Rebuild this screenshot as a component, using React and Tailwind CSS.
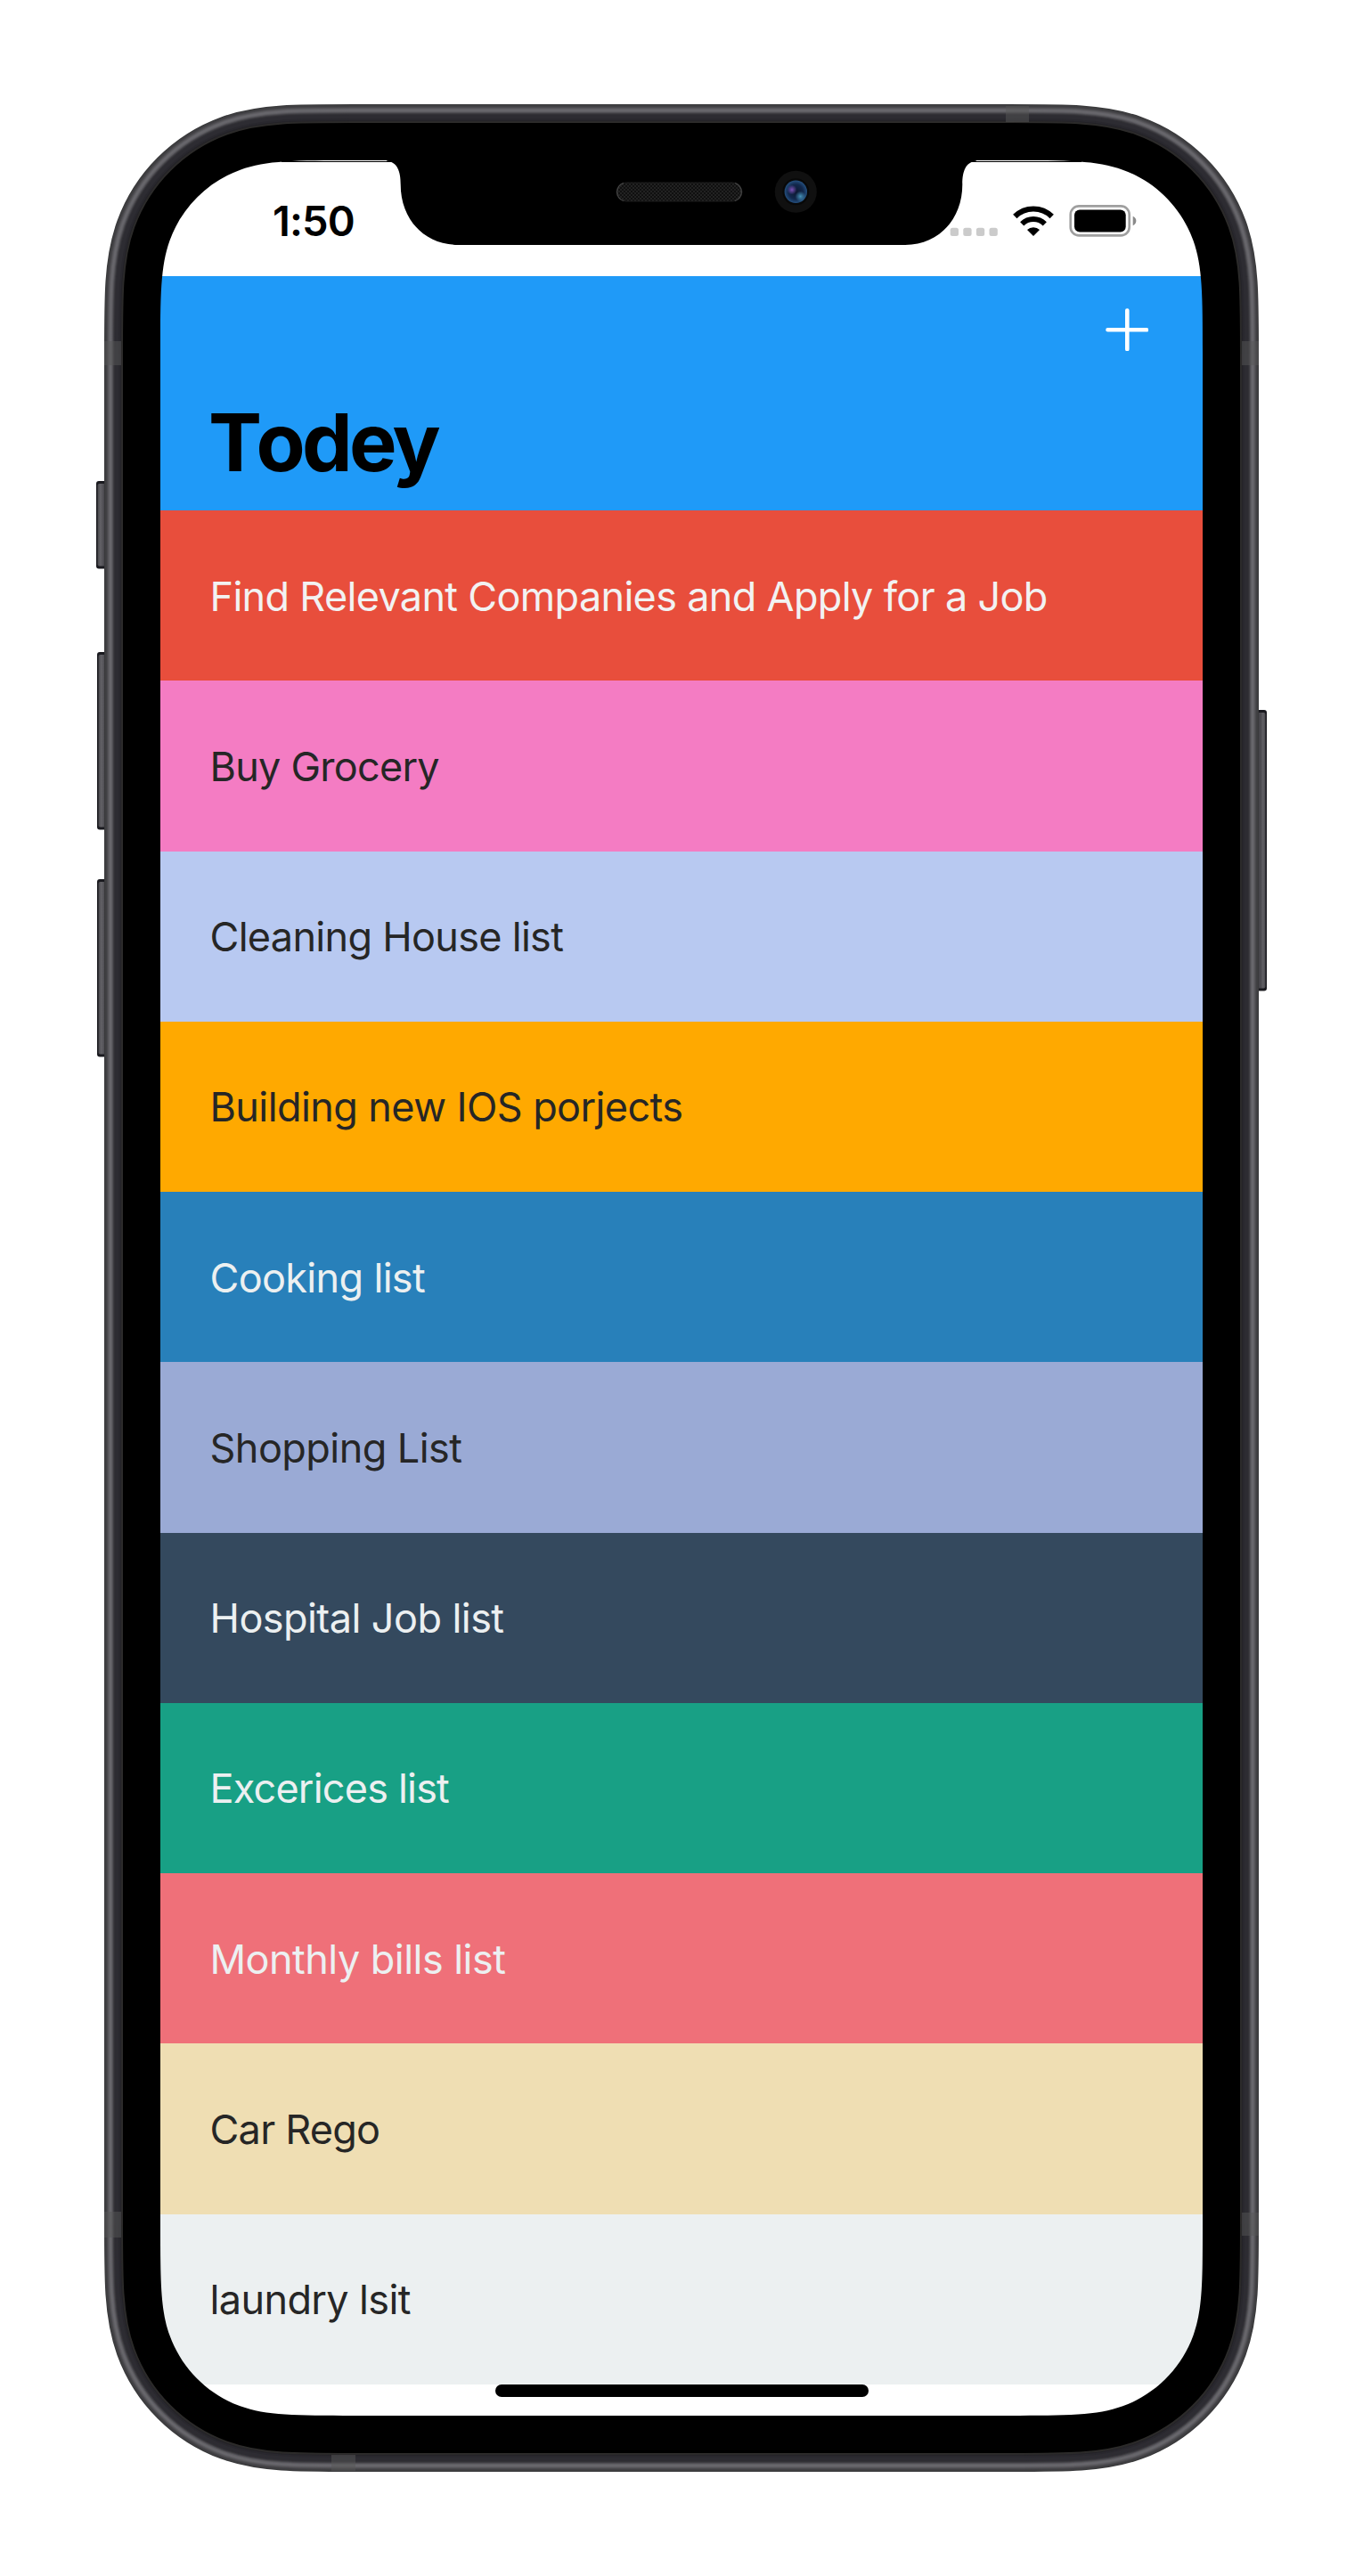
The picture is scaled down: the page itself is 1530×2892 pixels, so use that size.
const rows = [
  { t: "Find Relevant Companies and Apply for a Job", c: "bg-[#e84e3c] text-[#f2f2f2] tracking-[-0.68px]" },
  { t: "Buy Grocery", c: "bg-[#f47cc3] text-[#262626] tracking-[-0.75px]" },
  { t: "Cleaning House list", c: "bg-[#b8c9f1] text-[#262626] tracking-[-0.7px]" },
  { t: "Building new IOS porjects", c: "bg-[#ffa900] text-[#262626] tracking-[-0.59px]" },
  { t: "Cooking list", c: "bg-[#2880ba] text-[#ecf0f1] tracking-[-0.67px]" },
  { t: "Shopping List", c: "bg-[#9aaad5] text-[#262626] tracking-[-0.55px]" },
  { t: "Hospital Job list", c: "bg-[#34495e] text-[#ecf0f1] tracking-[-0.56px]" },
  { t: "Excerices list", c: "bg-[#18a085] text-[#ecf0f1] tracking-[-0.8px]" },
  { t: "Monthly bills list", c: "bg-[#ef7079] text-[#ecf0f1] tracking-[-0.54px]" },
  { t: "Car Rego", c: "bg-[#efdeb3] text-[#262626] tracking-[-0.75px]" },
  { t: "laundry lsit", c: "bg-[#ecf0f1] text-[#262626] tracking-[-0.62px]" },
];

// Continuous-corner rounded rectangle.
function squircle(x, y, w, h, r) {
  const [a, b, c, d, e, f, g] = [1.52866, 1.07, 0.8371, 0.63149, 0.07491, 0.37282, 0.16906].map((v) => v * r);
  const R = x + w;
  const B = y + h;
  return `M${x + a} ${y}H${R - a}C${R - b} ${y} ${R - c} ${y} ${R - d} ${y + e}C${R - f} ${y + g} ${R - g} ${y + f} ${R - e} ${y + d}C${R} ${y + c} ${R} ${y + b} ${R} ${y + a}V${B - a}C${R} ${B - b} ${R} ${B - c} ${R - e} ${B - d}C${R - g} ${B - f} ${R - f} ${B - g} ${R - d} ${B - e}C${R - c} ${B} ${R - b} ${B} ${R - a} ${B}H${x + a}C${x + b} ${B} ${x + c} ${B} ${x + d} ${B - e}C${x + f} ${B - g} ${x + g} ${B - f} ${x + e} ${B - d}C${x} ${B - c} ${x} ${B - b} ${x} ${B - a}V${y + a}C${x} ${y + b} ${x} ${y + c} ${x + e} ${y + d}C${x + g} ${y + f} ${x + f} ${y + g} ${x + d} ${y + e}C${x + c} ${y} ${x + b} ${y} ${x + a} ${y}Z`;
}

const screen = squircle(180, 180, 1170, 2532, 142);
const corners = squircle(170, 170, 1190, 2552, 130) + screen;

// Metal band, outermost ring first: [distance from the screen edge, colour].
const band = [
  [63, "#39393b"], [62, "#3f3f41"], [61, "#414044"], [60, "#4a494d"], [59, "#565559"],
  [58, "#605f64"], [57, "#68676c"], [56, "#67666b"], [55, "#5f5e63"], [54, "#4f4e53"],
  [53, "#3e3d42"], [52, "#323136"], [51, "#2d2c32"], [47, "#29282e"], [45, "#242328"],
  [44, "#2b2a2a"], [43, "#2d2c2b"],
];

function SideButton({ x, y, w, h, flip }) {
  return (
    <g>
      <rect x={x} y={y} width={w} height={h} rx="3" fill="#1a1a1f" />
      <rect x={flip ? x : x + 1.5} y={y + 3} width={w - 1.5} height={h - 6} rx="2" fill={flip ? "url(#btnR)" : "url(#btnL)"} />
    </g>
  );
}

function Chassis() {
  return (
    <svg className="absolute inset-0" width="1530" height="2892" viewBox="0 0 1530 2892" fill="none">
      <defs>
        <linearGradient id="btnL"><stop offset="0" stopColor="#47464a" /><stop offset=".3" stopColor="#626166" /><stop offset=".55" stopColor="#545358" /><stop offset="1" stopColor="#333238" /></linearGradient>
        <linearGradient id="btnR"><stop offset="0" stopColor="#3b3a3f" /><stop offset=".5" stopColor="#4c4b50" /><stop offset=".75" stopColor="#626166" /><stop offset="1" stopColor="#47464a" /></linearGradient>
      </defs>
      <SideButton x={108} y={540} w={12} h={98.5} />
      <SideButton x={109} y={732} w={12} h={199.5} />
      <SideButton x={109} y={987} w={12} h={199.5} />
      <SideButton x={1410} y={797} w={12} h={315.5} flip />
      {band.map(([d, c]) => <path key={d} d={screen} stroke={c} strokeWidth={d * 2} />)}
      <path d={screen} stroke="#000" strokeWidth="84" />
      <g fill="#555" fillOpacity=".5">
        <rect x="117" y="383" width="19" height="27" />
        <rect x="1394" y="383" width="19" height="27" />
        <rect x="117" y="2483" width="19" height="29" />
        <rect x="1394" y="2484" width="19" height="26" />
        <rect x="1129" y="119" width="26" height="18" />
        <rect x="372" y="2756" width="27" height="18" />
      </g>
    </svg>
  );
}

// Black corners and notch that lie over the screen content.
function Bezel() {
  return (
    <svg className="pointer-events-none absolute inset-0" width="1530" height="2892" viewBox="0 0 1530 2892" fill="none">
      <defs>
        <radialGradient id="lens"><stop offset="0" stopColor="#0c1730" /><stop offset=".65" stopColor="#12284c" /><stop offset="1" stopColor="#244f7e" /></radialGradient>
        <radialGradient id="violet"><stop offset="0" stopColor="#7a50b4" /><stop offset="1" stopColor="#7a50b4" stopOpacity="0" /></radialGradient>
        <radialGradient id="cyan"><stop offset="0" stopColor="#4590b5" /><stop offset="1" stopColor="#4590b5" stopOpacity="0" /></radialGradient>
        <pattern id="mesh" width="4" height="4" patternUnits="userSpaceOnUse"><rect width="4" height="4" fill="#101010" /><rect width="2" height="2" fill="#222" /><rect x="2" y="2" width="2" height="2" fill="#222" /></pattern>
      </defs>
      <path d={corners} fill="#000" fillRule="evenodd" />
      <path d="M316 181H440V182H316ZM1090 181H1214V182H1090Z" fill="#000" />
      <path d="M434 179V180.5C446 182 449.7 192 449.7 207C449.7 246 476 275 515 275H1015C1054 275 1080.3 246 1080.3 207C1080.3 192 1084 182 1096 180.5V179Z" fill="#000" />
      <rect x="692" y="205" width="141" height="21" rx="10.5" fill="url(#mesh)" stroke="#1c1c1c" />
      <path d="M700 205.5A10.5 10.5 0 0 0 700 225.5M825 205.5A10.5 10.5 0 0 1 825 225.5" stroke="#484848" strokeWidth="1.2" />
      <circle cx="893.3" cy="215.3" r="23.5" fill="#101010" />
      <circle cx="893.3" cy="215.3" r="15" fill="#080808" />
      <circle cx="893.3" cy="215.3" r="12.7" fill="url(#lens)" />
      <circle cx="889" cy="213" r="5.5" fill="url(#violet)" />
      <circle cx="898.5" cy="220.5" r="6" fill="url(#cyan)" />
    </svg>
  );
}

function StatusIcons() {
  return (
    <svg width="212" height="40" viewBox="1065 228 212 40" fill="none">
      {[1066.7, 1081.3, 1095.9, 1110.5].map((x) => <rect key={x} x={x} y="255.7" width="9.3" height="9.3" rx="2.5" fill="#cbcbcb" />)}
      <path d="M1139.3 243A29.5 29.5 0 0 1 1180.7 243" stroke="#000" strokeWidth="6.2" />
      <path d="M1147.2 251.3A18.4 18.4 0 0 1 1172.8 251.3" stroke="#000" strokeWidth="6" />
      <path d="M1160 265L1153 258A10 10 0 0 1 1167 258Z" fill="#000" />
      <rect x="1201.7" y="231.4" width="66" height="33" rx="9.5" stroke="#9f9f9f" strokeWidth="2.6" />
      <rect x="1206" y="235.6" width="57.7" height="24.8" rx="6" fill="#000" />
      <path d="M1271.7 242.8C1276.6 244.6 1276.6 251.4 1271.7 253.2Z" fill="#8a8a8a" />
    </svg>
  );
}

export default function App() {
  return (
    <div className="relative h-[2892px] w-[1530px] overflow-hidden bg-white p-[180px] font-['Inter',sans-serif]">
      <Chassis />
      <div className="relative flex h-[2532px] w-[1170px] flex-col overflow-hidden rounded-[115px] bg-white">
        <div className="flex h-[130px] items-start justify-between pr-[73px] pl-[126px]">
          <span className="mt-[40px] text-[47px] leading-[56px] font-semibold tracking-[-0.9px] text-black">1:50</span>
          <span className="mt-[48px]"><StatusIcons /></span>
        </div>
        <header className="flex h-[263px] flex-col bg-[#1f9af8]">
          <div className="flex justify-end pt-[36px] pr-[61px]">
            <svg width="48" height="48" viewBox="0 0 48 48" stroke="#fff" strokeWidth="4.6" strokeLinecap="round"><path d="M24.3 2.5V46M2.5 24.3H46" /></svg>
          </div>
          <h1 className="mt-[48px] pl-[54px] text-[90px] leading-[110px] font-bold tracking-[-3.7px] text-black"><span className="tracking-[-6.5px]">T</span>odey</h1>
        </header>
        <ul>
          {rows.map((r) => (
            <li key={r.t} className={"flex h-[191.28px] items-center pt-0.5 pl-[55.5px] text-[45px] leading-[56px] whitespace-nowrap " + r.c}>
              {r.t}
            </li>
          ))}
        </ul>
        <div className="ml-[376px] h-[14px] w-[419px] rounded-full bg-black" />
      </div>
      <Bezel />
    </div>
  );
}
